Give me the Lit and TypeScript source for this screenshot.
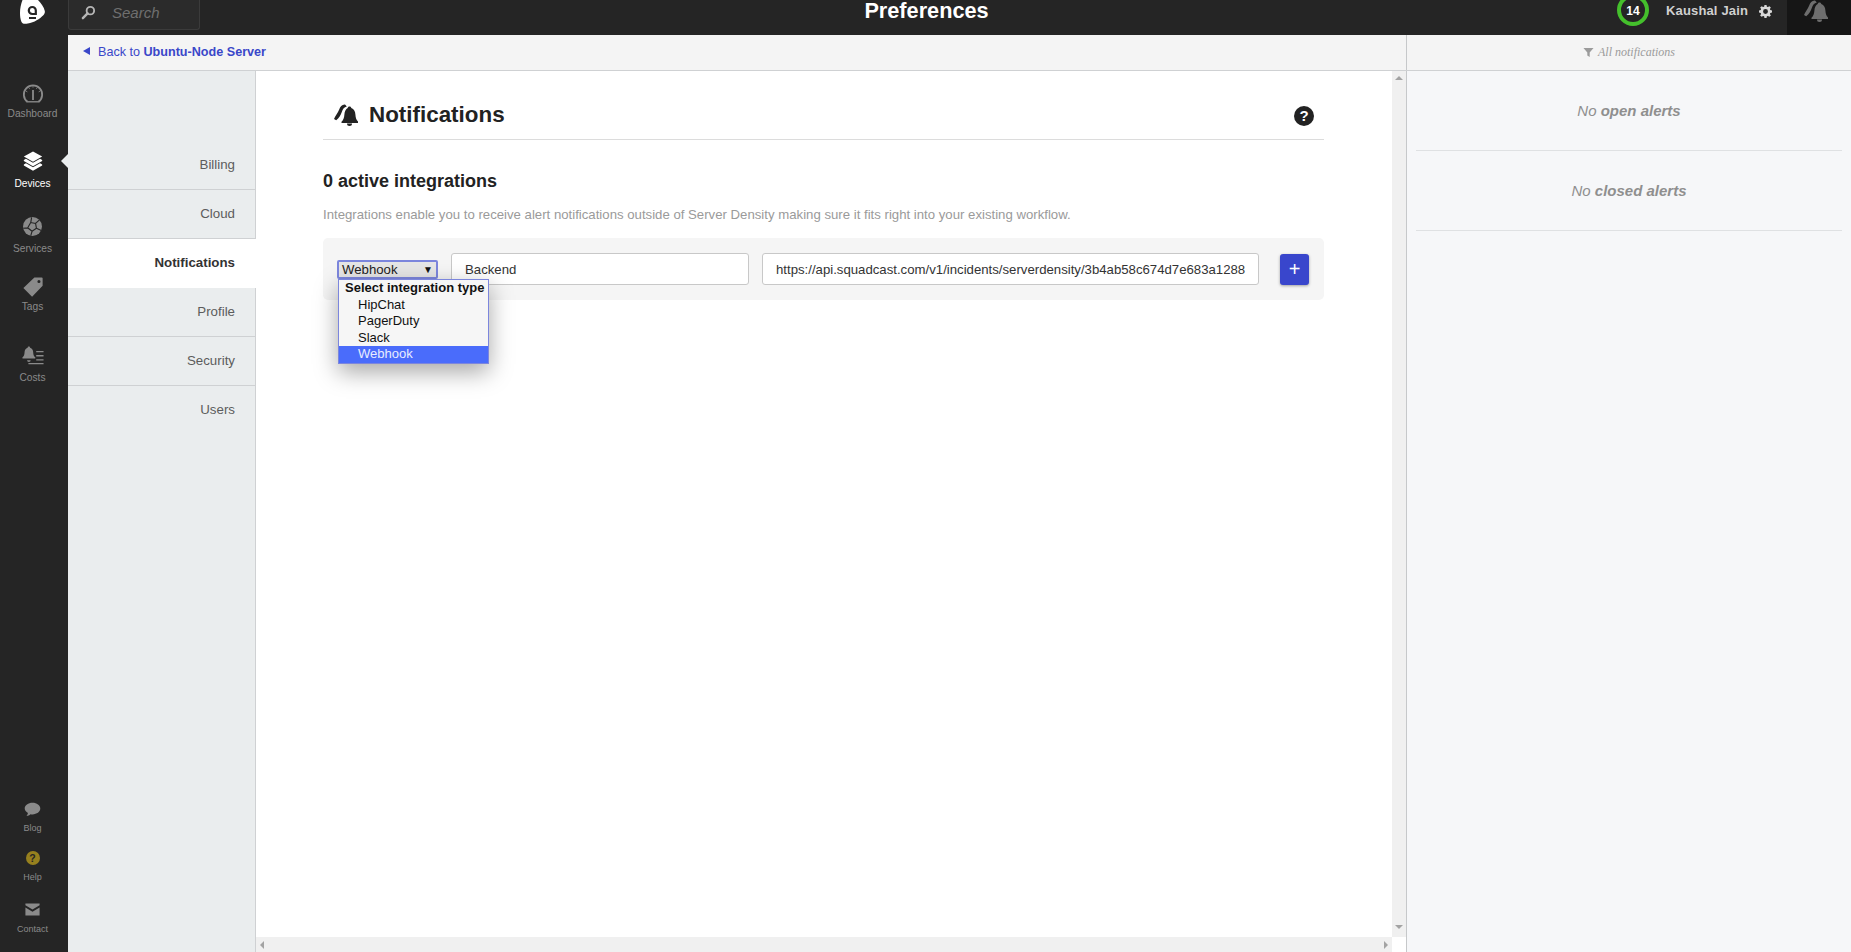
import { LitElement, html, css, svg } from "lit";
import { customElement } from "lit/decorators.js";

const ringingBell = svg`
  <path d="M0 15C1.500 11 3.800 9.500 5.200 5.500 6.200 2.500 8 .3 11 .5l1.800 2C10.200 3 8.800 5 7.800 8 6.800 11.200 5 14.200 2.200 16.200z"/>
  <path d="M15.500 2.500c1 0 1.700.6 1.800 1.500 2.700.9 3.900 3.300 4.100 6.500.2 3.500 1 5.300 2.600 7v1.500H7.500v-1.200c1.800-1.800 2.700-3.800 2.900-7.300.2-3.200 1.400-5.600 3.300-6.500.1-.9.800-1.500 1.800-1.500z"/>
  <path d="M13 19.500h5a2.500 2.500 0 0 1-5 0z"/>
`;

const railIcons: Record<string, unknown> = {
  dashboard: svg`<svg viewBox="0 0 24 24" width="22" height="22" fill="none" stroke="currentColor">
    <path d="M6 20.500a10 10 0 1 1 12 0" stroke-width="2"/>
    <path d="M12 7.500v11" stroke-width="2"/>
    <path d="M12 3.500v1.500M7.500 5l.8 1.300M16.500 5l-.8 1.300M4.500 9l1.300.7M19.500 9l-1.300.7" stroke-width="1"/>
    <path d="M5 20.500h14" stroke-width="1.500"/>
  </svg>`,
  devices: svg`<svg viewBox="0 0 24 24" width="22" height="22" fill="currentColor">
    <path d="M12 1.500 22 7.200 12 12.800 2 7.200z"/>
    <path d="M2 10.800 4.300 9.600 12 14l7.700-4.400 2.300 1.200v1.200L12 17.600 2 12z"/>
    <path d="M2 15.700 4.300 14.500 12 18.900l7.700-4.400 2.300 1.200v1.200L12 22.500 2 17z"/>
  </svg>`,
  services: svg`<svg viewBox="0 0 24 24" width="21" height="21" fill="currentColor">
    <circle cx="12" cy="12" r="10.800"/>
    <path fill="none" stroke="#252525" stroke-width="1.300" d="M10 7.500 6.500 13.500l5 4 5-3.500-1-5.500zM11 1.500l-1 6M6.500 13.500l-5 .5M16.500 14l5.500 2.500M15.500 8.500 20 4.500M11.500 17.500l-1.500 5"/>
  </svg>`,
  tags: svg`<svg viewBox="0 0 24 24" width="22" height="22" fill="currentColor">
    <path fill-rule="evenodd" d="M13.500 1.500h8a1 1 0 0 1 1 1v8L11 22.500 1.500 13zM18.500 4.300a1.700 1.700 0 1 0 0 3.400 1.700 1.700 0 0 0 0-3.400z"/>
  </svg>`,
  costs: svg`<svg viewBox="0 0 24 24" width="24" height="22" fill="currentColor">
    <path d="M7.500 1.500c.8 0 1.300.6 1.400 1.400 2.300.7 3.200 2.600 3.300 5 .1 3 .8 4.400 2.300 5.800.4.400.2 1-.4 1H.9c-.6 0-.8-.6-.4-1C2 12.300 2.700 10.900 2.800 7.900c.1-2.400 1-4.300 3.300-5 .1-.8.600-1.400 1.400-1.400zM5.500 16.500h4a2 2 0 0 1-4 0z"/>
    <path d="M15.500 6.500h8v1.500h-8zM15.500 11h8v1.500h-8zM15.500 15.500h8V17h-8zM7 19.500h16.500V21H7z"/>
  </svg>`,
  blog: svg`<svg viewBox="0 0 24 24" width="17" height="17" fill="currentColor">
    <path d="M12 2.500c6 0 11 3.600 11 8.200s-5 8.200-11 8.200c-1 0-1.900-.1-2.800-.3-1.500 1.300-3.400 2.200-5.600 2.400 1-1.100 1.700-2.400 2-3.900C2.900 15.500 1 13.300 1 10.700c0-4.600 5-8.200 11-8.200z"/>
  </svg>`,
  contact: svg`<svg viewBox="0 0 24 24" width="17" height="17" fill="currentColor">
    <path d="M2 3.500h20v2.500L12 12 2 6zM2 9l10 6 10-6v11.500H2z"/>
  </svg>`,
};

@customElement("app-root")
export class AppRoot extends LitElement {
  static styles = css`
    :host { display: block; width: 100%; height: 952px; overflow: hidden; font-family: "Liberation Sans", Arial, sans-serif; color: #222; }
    * { box-sizing: border-box; }
    .page { display: flex; height: 952px; }

    .rail { width: 68px; flex: none; background: #252525; display: flex; flex-direction: column; align-items: center; color: #8a8a8a; }
    .logo { height: 35px; width: 100%; padding-right: 3px; display: flex; justify-content: center; align-items: flex-start; }
    .nav { margin-top: 48px; display: flex; flex-direction: column; align-items: center; width: 100%; }
    .nav-item { display: flex; flex-direction: column; align-items: center; font-size: 10.200px; width: 100%; padding-right: 3px; position: relative; }
    .nav-item svg { display: block; }
    .nav-item.on { color: #fff; }
    .nav-item.on::after { content: ""; position: absolute; right: 0; top: 4px; border: 7px solid transparent; border-right-color: #eaedee; border-left: 0; }
    .nav-label { margin-top: 3px; line-height: 13px; }
    .i-dash { height: 49px; }
    .i-dash .nav-label { margin-top: 2px; }
    .i-dev { margin-top: 18px; height: 49px; }
    .i-dev .nav-label { margin-top: 5px; }
    .i-serv { margin-top: 17px; height: 45px; }
    .i-serv .nav-label { margin-top: 5px; }
    .i-tags { margin-top: 15px; height: 45px; }
    .i-tags .nav-label { margin-top: 2px; }
    .i-costs { margin-top: 24px; height: 46px; }
    .i-costs .nav-label { margin-top: 4px; }
    .foot { margin-top: auto; display: flex; flex-direction: column; align-items: center; width: 100%; padding-bottom: 17px; }
    .foot .nav-item { font-size: 9px; }
    .foot .nav-label { margin-top: 5px; line-height: 11px; }
    .foot .wide { margin-top: 6px; }
    .f-help { margin-top: 16px; }
    .f-contact { margin-top: 18px; }
    .help-dot { width: 14px; height: 14px; border-radius: 50%; background: #96801e; color: #252525; font-size: 10.500px; font-weight: 700; display: flex; align-items: center; justify-content: center; margin: 1px 0; }

    .body { flex: 1; min-width: 0; display: flex; flex-direction: column; }
    .top { height: 35px; background: #252525; color: #fff; flex: none; display: grid; grid-template-columns: 1fr auto 1fr; align-items: start; }
    .search { width: 132px; height: 30px; border: 1px solid #3b3b3b; border-top: 0; border-radius: 0 0 3px 3px; background: #2b2b2b; display: flex; align-items: center; color: #6f6f6f; font-style: italic; font-size: 15px; padding: 0 0 4px 12px; gap: 16px; }
    .title { font-size: 21.700px; font-weight: 700; line-height: 21px; padding-right: 66px; }
    .top-right { display: flex; justify-content: flex-end; align-items: flex-start; height: 35px; }
    .ring { width: 32px; height: 32px; margin-top: -6px; border: 4px solid #44c02c; border-radius: 50%; font-size: 12px; font-weight: 700; display: flex; align-items: center; justify-content: center; padding-top: 2px; }
    .user { color: #d0d0d0; font-size: 13px; font-weight: 700; letter-spacing: .15px; margin-left: 17px; line-height: 22px; }
    .gear { margin-left: 11px; margin-top: 5px; color: #d8d8d8; display: block; }
    .bellbox { width: 64px; margin-left: 15px; height: 35px; background: #161616; color: #6e6e6e; display: flex; justify-content: center; padding-right: 6px; }

    .sub { height: 36px; flex: none; display: flex; background: #f4f4f4; border-bottom: 1px solid #cfd1d3; }
    .back { flex: 1; font-size: 12.600px; color: #3a47c9; display: flex; align-items: center; padding-left: 15px; padding-bottom: 2px; }
    .back b { font-weight: 700; margin-left: 3.500px; }
    .back .tri { width: 0; height: 0; border: 4px solid transparent; border-right: 7px solid #3a47c9; border-left: 0; margin-right: 8px; margin-bottom: 2px; }
    .filter { width: 445px; flex: none; border-left: 1px solid #c6c8ca; display: flex; align-items: center; justify-content: center; color: #9b9b9b; font-family: "Liberation Serif", serif; font-style: italic; font-size: 12px; gap: 4px; }

    .row { flex: 1; min-height: 0; display: flex; }
    .side { width: 188px; flex: none; background: #eaedee; border-right: 1px solid #cfd1d3; padding-top: 70px; font-size: 13.300px; color: #5c5c5c; text-align: right; display: flex; flex-direction: column; }
    .tab { height: 49px; padding: 15px 20px 0 0; border-bottom: 1px solid #cfd1d3; line-height: 17px; }
    .tab.on { background: #fff; color: #333; font-weight: 700; margin-right: -1px; padding-right: 21px; border-bottom-color: transparent; position: relative; }
    .tab.last { border-bottom: 0; }

    .main { flex: 1; min-width: 0; display: grid; grid-template-columns: 1fr 14px; grid-template-rows: 1fr 15px; background: #fff; }
    .content { padding: 21px 68px 0 67px; overflow: hidden; }
    .head { height: 48px; display: flex; align-items: center; border-bottom: 1px solid #dcdcdc; padding: 0 10px 2px 11px; }
    .head h1 { margin: 0 0 0 11px; font-size: 22.400px; font-weight: 700; color: #222; flex: 1; line-height: 26px; }
    .q { width: 20px; height: 20px; border-radius: 50%; background: #222; color: #fff; font-weight: 700; font-size: 15px; display: flex; align-items: center; justify-content: center; margin-top: 2px; }
    h2 { margin: 30px 0 0; font-size: 18px; line-height: 22px; font-weight: 700; color: #222; }
    .desc { margin: 15px 0 0; font-size: 13.200px; color: #9a9a9a; line-height: 16px; }
    .int { margin-top: 15px; height: 62px; background: #f5f5f5; border-radius: 5px; display: flex; align-items: center; padding: 0 15px 0 14px; position: relative; font-size: 13.200px; }
    .sel { width: 101px; height: 19px; background: #e6e6e6; border: 2px solid #7c86dd; border-radius: 2px; color: #222; display: flex; align-items: center; justify-content: space-between; padding: 0 3px 0 3px; font-size: 13.200px; }
    .sel i { font-style: normal; font-size: 10px; color: #111; }
    .inp { height: 32px; background: #fff; border: 1px solid #c8c8c8; border-radius: 3px; color: #333; display: flex; align-items: center; white-space: nowrap; overflow: hidden; }
    .i1 { width: 298px; margin-left: 13px; padding-left: 13px; }
    .i2 { width: 497px; margin-left: 13px; padding-left: 13px; }
    .plus { width: 29px; height: 31px; margin-left: 21px; background: #3946cc; border-radius: 3px; color: #fff; font-size: 20px; display: flex; align-items: center; justify-content: center; box-shadow: 0 1px 3px rgba(0,0,0,.35); }
    .menu { position: absolute; left: 15px; top: 41px; width: 151px; background: #f6f6f6; border: 1px solid #7c86dd; box-shadow: 0 8px 22px rgba(0,0,0,.35); font-size: 13px; color: #111; line-height: 16.400px; }
    .menu div { padding-left: 19px; height: 16.500px; }
    .menu .hd { font-weight: 700; padding-left: 6px; }
    .menu .sl { background: #4a6cfb; color: #e8ecff; }

    .sb-v { background: #f0f0f0; display: flex; flex-direction: column; justify-content: space-between; align-items: center; padding: 5px 0 8px; }
    .sb-h { background: #f0f0f0; display: flex; justify-content: space-between; align-items: center; padding: 0 4px; }
    .corner { background: #fff; }
    .t-up, .t-dn { width: 0; height: 0; border: 4px solid transparent; }
    .t-up { border-bottom: 4px solid #a3a3a3; border-top: 0; }
    .t-dn { border-top: 4px solid #a3a3a3; border-bottom: 0; }
    .t-l, .t-r { width: 0; height: 0; border: 4px solid transparent; }
    .t-l { border-right: 4px solid #a3a3a3; border-left: 0; }
    .t-r { border-left: 4px solid #a3a3a3; border-right: 0; }

    .alerts { width: 445px; flex: none; background: #f6f7f9; border-left: 1px solid #c6c8ca; padding: 0 9px; color: #8f8f8f; font-size: 15px; font-style: italic; text-align: center; }
    .alert { height: 80px; border-bottom: 1px solid #dfe1e3; padding-top: 31px; line-height: 18px; }
    .alert b { font-weight: 700; }
  `;

  render() {
    const nav = (cls: string, key: string, label: string, on = false) => html`
      <div class="nav-item ${cls} ${on ? "on" : ""}">${railIcons[key]}<span class="nav-label">${label}</span></div>`;
    return html`
      <div class="page">
        <aside class="rail">
          <div class="logo">
            <svg viewBox="0 0 25 24" width="25" height="24">
              <path fill="#fff" d="M2.500 0h15.500c3 3 6 7 6.800 11 .3 1.500-.3 3-1.500 4.200-3.500 3.700-9 7.200-15.500 8.300C5 24 2.500 24 1.500 22 .3 19 0 16 0 13 0 8 1 4 2.500 0z"/>
              <path fill="none" stroke="#252525" stroke-width="2.200" d="M15.800 10.500a3.500 3.500 0 1 0-3.500 3.500h3.500v-3.500M9 18h7"/>
            </svg>
          </div>
          <div class="nav">
            ${nav("i-dash", "dashboard", "Dashboard")}
            ${nav("i-dev", "devices", "Devices", true)}
            ${nav("i-serv", "services", "Services")}
            ${nav("i-tags", "tags", "Tags")}
            ${nav("i-costs", "costs", "Costs")}
          </div>
          <div class="foot">
            <div class="nav-item">${railIcons.blog}<span class="nav-label">Blog</span></div>
            <div class="nav-item f-help"><span class="help-dot">?</span><span class="nav-label wide">Help</span></div>
            <div class="nav-item f-contact">${railIcons.contact}<span class="nav-label wide">Contact</span></div>
          </div>
        </aside>
        <div class="body">
          <header class="top">
            <div class="search">
              <svg viewBox="0 0 16 16" width="15" height="15" fill="none" stroke="#b5b5b5"><circle cx="10" cy="6" r="4" stroke-width="2"/><path d="M7 9l-5 5" stroke-width="2.600" stroke-linecap="round"/></svg>
              <span>Search</span>
            </div>
            <div class="title">Preferences</div>
            <div class="top-right">
              <div class="ring">14</div>
              <div class="user">Kaushal Jain</div>
              <svg class="gear" viewBox="0 0 16 16" width="13" height="13"><path fill="currentColor" fill-rule="evenodd" d="M6.700 0h2.600l.4 2.100 1.300.5L12.800 1.400l1.800 1.800-1.200 1.800.5 1.300 2.100.4v2.600l-2.100.4-.5 1.300 1.200 1.800-1.800 1.800-1.800-1.200-1.300.5-.4 2.100H6.700l-.4-2.100-1.300-.5-1.800 1.200-1.800-1.800 1.200-1.800-.5-1.300L0 9.300V6.700l2.100-.4.500-1.300L1.400 3.200l1.800-1.800L5 2.600l1.300-.5zM8 5a3 3 0 1 0 0 6 3 3 0 0 0 0-6z"/></svg>
              <div class="bellbox"><svg viewBox="0 0 24 22" width="24" height="22" fill="currentColor">${ringingBell}</svg></div>
            </div>
          </header>
          <div class="sub">
            <div class="back"><span class="tri"></span>Back to <b>Ubuntu-Node Server</b></div>
            <div class="filter"><svg viewBox="0 0 12 12" width="11" height="11" fill="#9b9b9b"><path d="M.500 1h11L7.300 6v5l-2.600-1.600V6z"/></svg>All notifications</div>
          </div>
          <div class="row">
            <nav class="side">
              <div class="tab">Billing</div>
              <div class="tab">Cloud</div>
              <div class="tab on">Notifications</div>
              <div class="tab">Profile</div>
              <div class="tab">Security</div>
              <div class="tab last">Users</div>
            </nav>
            <main class="main">
              <div class="content">
                <div class="head">
                  <svg viewBox="0 0 24 22" width="24" height="22" fill="#222">${ringingBell}</svg>
                  <h1>Notifications</h1>
                  <div class="q">?</div>
                </div>
                <h2>0 active integrations</h2>
                <p class="desc">Integrations enable you to receive alert notifications outside of Server Density making sure it fits right into your existing workflow.</p>
                <div class="int">
                  <div class="sel"><span>Webhook</span><i>▼</i></div>
                  <div class="inp i1">Backend</div>
                  <div class="inp i2">https://api.squadcast.com/v1/incidents/serverdensity/3b4ab58c674d7e683a1288</div>
                  <div class="plus">+</div>
                  <div class="menu">
                    <div class="hd">Select integration type</div>
                    <div>HipChat</div>
                    <div>PagerDuty</div>
                    <div>Slack</div>
                    <div class="sl">Webhook</div>
                  </div>
                </div>
              </div>
              <div class="sb-v"><span class="t-up"></span><span class="t-dn"></span></div>
              <div class="sb-h"><span class="t-l"></span><span class="t-r"></span></div>
              <div class="corner"></div>
            </main>
            <aside class="alerts">
              <div class="alert">No <b>open alerts</b></div>
              <div class="alert">No <b>closed alerts</b></div>
            </aside>
          </div>
        </div>
      </div>`;
  }
}
